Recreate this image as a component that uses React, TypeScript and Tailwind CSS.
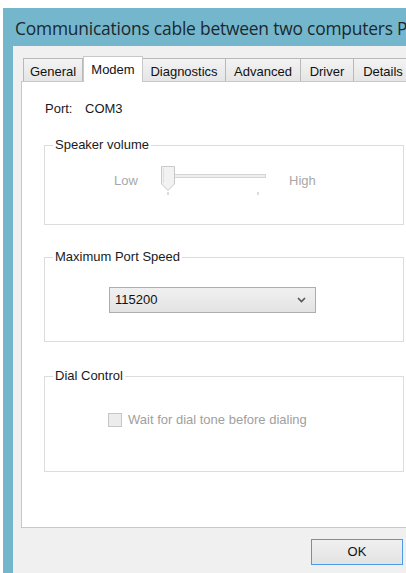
import React from 'react'

const tabs = [
  { name: 'General', w: 'w-[60px]' },
  { name: 'Modem', w: 'w-[60px]', active: true },
  { name: 'Diagnostics', w: 'w-[84px]' },
  { name: 'Advanced', w: 'w-[76px]' },
  { name: 'Driver', w: 'w-[54px]' },
  { name: 'Details', w: 'w-[60px]' },
]

function Slider() {
  return (
    <svg width="108" height="30" viewBox="0 0 108 30" className="block">
      {/* track */}
      <rect x="4.5" y="8.5" width="100" height="3" fill="#eef0f0" stroke="#d4d4d4" />
      {/* thumb */}
      <path d="M0.5 0.5 H13.5 V18 L7 24.5 L0.5 18 Z" fill="#f2f2f2" stroke="#c9c9c9" />
      <path d="M2.5 2.5 V17" stroke="#e0e0e0" />
      {/* ticks */}
      <line x1="7" y1="26" x2="7" y2="29" stroke="#b8b8b8" />
      <line x1="97" y1="26" x2="97" y2="29" stroke="#b8b8b8" />
    </svg>
  )
}

function Group({ label, className, children }: { label: string; className: string; children?: React.ReactNode }) {
  return (
    <div className={'relative border border-[#dcdcdc] ' + className}>
      <span className="absolute -top-[9px] left-[8px] bg-white px-[2px] text-[13px] leading-[16px] text-[#1a1a1a]">{label}</span>
      {children}
    </div>
  )
}

export default function App() {
  return (
    <div className="w-[406px] h-[573px] bg-white overflow-hidden pt-[8px] pl-[3px] font-['Liberation_Sans',Arial,sans-serif]">
      <div className="h-full bg-[#74b7cc] flex flex-col">
        <div className="h-[38px] pl-[12px] pt-[10px] overflow-hidden whitespace-nowrap text-[17.4px] leading-[20px] text-[#1b2830] font-['Open_Sans',sans-serif] tracking-[-0.2px]">
          Communications cable between two computers Properties
        </div>
        <div className="flex-1 ml-[10px] bg-[#f0f0f0] flex flex-col">
          {/* tab strip */}
          <div className="flex pl-[10px] pt-[10px] items-end h-[35px]">
            {tabs.map((t) =>
              t.active ? (
                <div
                  key={t.name}
                  className={t.w + ' shrink-0 h-[26px] -mb-px relative z-10 bg-white border border-b-0 border-[#c8c8c8] text-[13px] text-[#111] text-center pt-[3px]'}
                >
                  {t.name}
                </div>
              ) : (
                <div
                  key={t.name}
                  className={t.w + ' shrink-0 h-[23px] bg-gradient-to-b from-[#f3f3f3] to-[#e5e5e5] border border-b-0 border-[#b9b9b9] -ml-px first:ml-0 text-[13px] text-[#111] text-center pt-[3px]'}
                >
                  {t.name}
                </div>
              )
            )}
          </div>

          {/* tab panel */}
          <div className="ml-[8px] h-[447px] bg-white border border-[#c8c8c8] border-r-0 pl-[22px] pr-[2px]">
            <div className="flex pt-[19px] pl-[1px] text-[13px] leading-[15px] text-[#1a1a1a]">
              <span className="w-[40px]">Port:</span>
              <span>COM3</span>
            </div>

            <Group label="Speaker volume" className="mt-[29px] h-[80px]">
              <div className="flex items-start pl-[69px] pt-[20px]">
                <span className="text-[13px] leading-[15px] text-[#a8a8a8] mt-[7px] w-[47px]">Low</span>
                <Slider />
                <span className="text-[13px] leading-[15px] text-[#a8a8a8] mt-[7px] ml-[20px]">High</span>
              </div>
            </Group>

            <Group label="Maximum Port Speed" className="mt-[32px] h-[85px]">
              <div className="pl-[64px] pt-[29px]">
                <div className="w-[207px] h-[26px] border border-[#adadad] bg-gradient-to-b from-[#f0f0f0] to-[#e3e3e3] flex items-center justify-between pl-[5px] pr-[9px]">
                  <span className="text-[13px] text-[#111]">115200</span>
                  <svg width="9" height="6" viewBox="0 0 9 6">
                    <path d="M1 1 L4.5 4.5 L8 1" fill="none" stroke="#555" strokeWidth="1.6" />
                  </svg>
                </div>
              </div>
            </Group>

            <Group label="Dial Control" className="mt-[34px] h-[96px]">
              <div className="flex items-center pl-[63px] pt-[33px]">
                <span className="w-[14px] h-[14px] border border-[#c6c6c6] bg-[#ececec]" />
                <span className="ml-[6px] text-[13px] text-[#a0a0a0]">Wait for dial tone before dialing</span>
              </div>
            </Group>
          </div>

          {/* buttons */}
          <div className="flex justify-end pt-[11px] pr-[3px]">
            <button className="w-[92px] h-[26px] border border-[#4d9be6] bg-gradient-to-b from-[#f0f0f0] to-[#e3e3e3] text-[13px] text-[#111]">
              OK
            </button>
          </div>
        </div>
      </div>
    </div>
  )
}
